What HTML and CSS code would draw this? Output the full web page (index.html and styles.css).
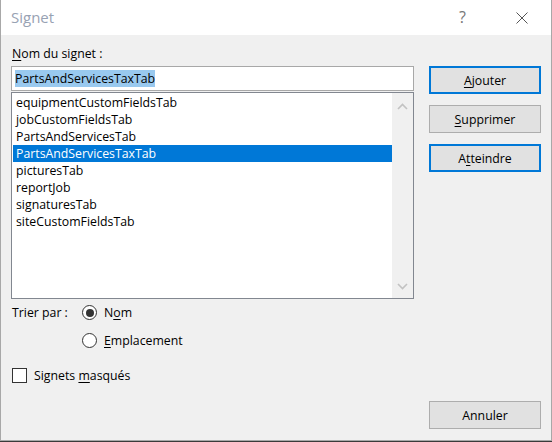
FILE: index.html
```html
<!DOCTYPE html>
<html>
<head>
<meta charset="utf-8">
<link rel="stylesheet" href="styles.css">
</head>
<body>
<div class="window">
  <div class="titlebar">
    <span class="title">Signet</span>
    <span class="help">?</span>
    <svg class="close" width="12" height="12" viewBox="0 0 12 12"><path d="M0.5 0.5 L11.5 11.5 M11.5 0.5 L0.5 11.5" stroke="#555" stroke-width="1" fill="none"/></svg>
  </div>
  <div class="body">
    <div class="top">
      <div class="left">
        <div class="label"><u>N</u>om du signet :</div>
        <div class="input"><span class="sel">PartsAndServicesTaxTab</span></div>
        <div class="listbox">
          <ul class="items">
            <li>equipmentCustomFieldsTab</li>
            <li>jobCustomFieldsTab</li>
            <li>PartsAndServicesTab</li>
            <li class="active">PartsAndServicesTaxTab</li>
            <li>picturesTab</li>
            <li>reportJob</li>
            <li>signaturesTab</li>
            <li>siteCustomFieldsTab</li>
          </ul>
          <div class="scrollbar">
            <svg width="11" height="7" viewBox="0 0 11 7"><path d="M1 6 L5.5 1.5 L10 6" stroke="#c2c2c2" stroke-width="1.6" fill="none"/></svg>
            <svg width="11" height="7" viewBox="0 0 11 7"><path d="M1 1 L5.5 5.5 L10 1" stroke="#c2c2c2" stroke-width="1.6" fill="none"/></svg>
          </div>
        </div>
      </div>
      <div class="right">
        <div class="btn default"><u>A</u>jouter</div>
        <div class="btn"><u>S</u>upprimer</div>
        <div class="btn default">A<u>t</u>teindre</div>
      </div>
    </div>
    <div class="sort">
      <div class="sortlabel">Trier par :</div>
      <div class="radios">
        <div class="opt"><span class="radio on"></span><span>N<u>o</u>m</span></div>
        <div class="opt"><span class="radio"></span><span><u>E</u>mplacement</span></div>
      </div>
    </div>
    <div class="check"><span class="box"></span><span>Signets <u>m</u>asqués</span></div>
    <div class="bottom">
      <div class="btn">Annuler</div>
    </div>
  </div>
</div>
</body>
</html>
```

FILE: styles.css
```css
* { box-sizing: border-box; }
html, body { margin: 0; padding: 0; }
body {
  width: 552px;
  height: 442px;
  background: #3a3a3a;
  font-family: "Open Sans", "Noto Sans", sans-serif;
  font-size: 12.3px;
  color: #000;
  overflow: hidden;
}
u { text-decoration: underline; text-underline-offset: 2px; }
.window {
  width: 552px;
  height: 441px;
  border-left: 1px solid #a8a8a8;
  border-right: 1px solid #a8a8a8;
  border-bottom: 1px solid #a8a8a8;
  background: #f0f0f0;
  display: flex;
  flex-direction: column;
}
.titlebar {
  height: 35px;
  background: #fff;
  display: flex;
  align-items: center;
  padding-left: 10px;
  flex-shrink: 0;
}
.title {
  font-size: 15px;
  color: #98a2b3;
  flex: 1;
  margin-top: -1px;
}
.help {
  font-size: 16px;
  color: #777;
  margin-right: 50px;
  margin-top: -1px;
}
.close { margin-right: 23px; }
.body {
  flex: 1;
  padding: 10px 10px 0 10px;
  display: flex;
  flex-direction: column;
}
.top { display: flex; }
.left { width: 403px; }
.label { height: 21px; line-height: 17px; padding-left: 1px; }
.input {
  height: 25px;
  border: 1px solid #a8a8a8;
  background: #fff;
  padding: 3px 0 0 3px;
  line-height: 17px;
}
.sel { background: #99c9ef; }
.listbox {
  margin-top: 1px;
  height: 207px;
  border: 1px solid #828790;
  background: #fff;
  display: flex;
}
.items {
  list-style: none;
  margin: 0;
  padding: 1px 0 0 1px;
  flex: 1;
}
.items li {
  height: 17px;
  line-height: 17px;
  padding-left: 3px;
  white-space: nowrap;
}
.items li.active { background: #0078d7; color: #fff; }
.scrollbar {
  width: 21px;
  background: #f0f0f0;
  display: flex;
  flex-direction: column;
  justify-content: space-between;
  align-items: center;
  padding: 10px 0 8px 0;
}
.right {
  margin-left: 15px;
  padding-top: 21px;
  display: flex;
  flex-direction: column;
  gap: 11px;
}
.btn {
  width: 112px;
  height: 28px;
  background: #e1e1e1;
  border: 1px solid #adadad;
  display: flex;
  align-items: center;
  justify-content: center;
}
.btn.default { border: 2px solid #0078d7; }
.sort {
  display: flex;
  margin-top: -1px;
}
.sortlabel { width: 71px; padding-left: 1px; line-height: 17px; margin-top: 6px; }
.radios { display: flex; flex-direction: column; gap: 11px; }
.opt { display: flex; align-items: center; height: 17px; margin-top: 6px; }
.opt + .opt { margin-top: 0; }
.radio {
  width: 15px;
  height: 15px;
  border: 1px solid #333;
  border-radius: 50%;
  background: #fff;
  margin-right: 7px;
  display: flex;
  align-items: center;
  justify-content: center;
}
.radio.on::after {
  content: "";
  width: 8px;
  height: 8px;
  border-radius: 50%;
  background: #333;
}
.check {
  display: flex;
  align-items: center;
  margin-top: 18px;
  height: 17px;
}
.box {
  width: 15px;
  height: 15px;
  border: 1px solid #333;
  background: #fff;
  margin-right: 7px;
  margin-left: 1px;
}
.bottom {
  display: flex;
  justify-content: flex-end;
  margin-top: 17px;
  padding-right: 0;
}
```
